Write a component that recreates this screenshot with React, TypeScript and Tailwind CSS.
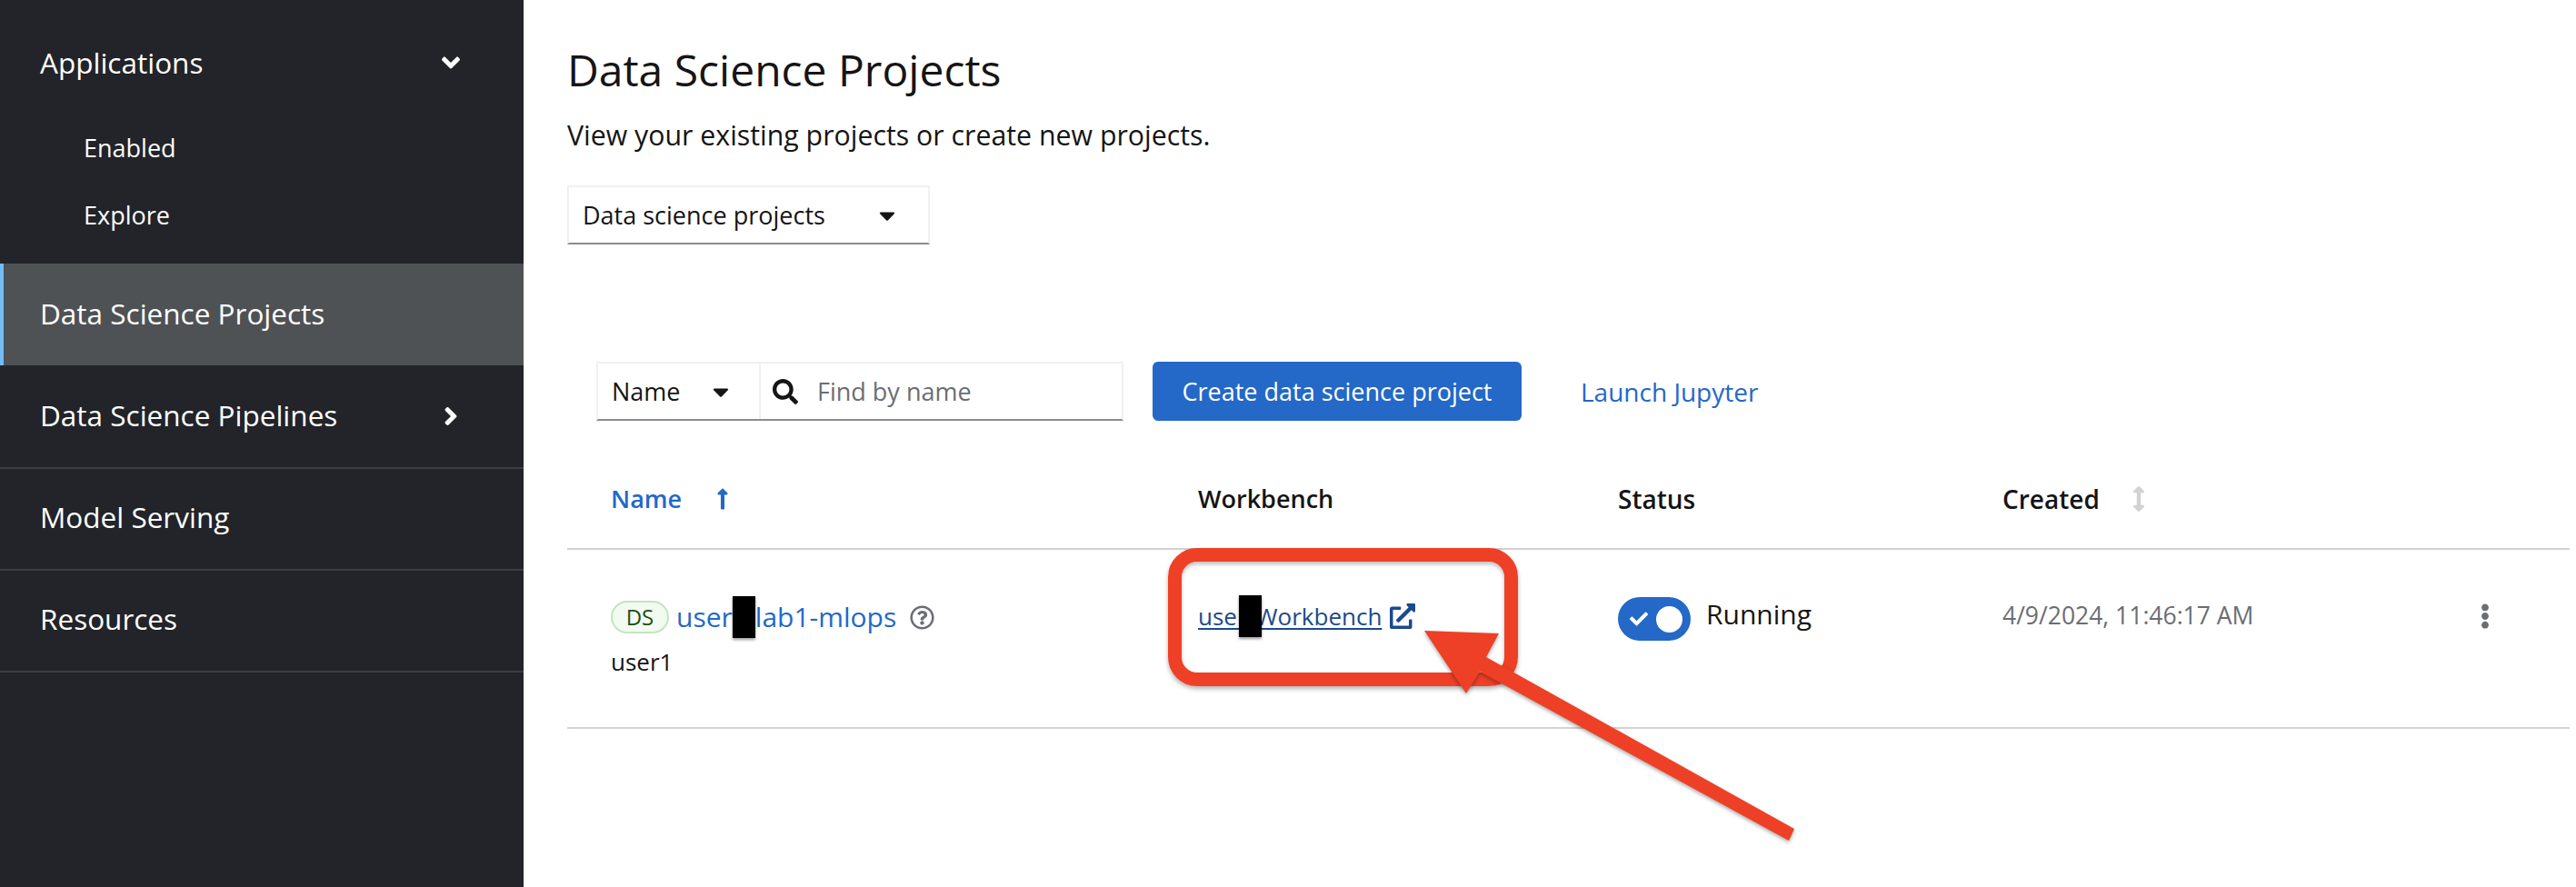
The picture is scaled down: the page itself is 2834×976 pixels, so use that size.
import React from "react";
import {
  FaAngleDown,
  FaAngleRight,
  FaArrowsAltV,
  FaCaretDown,
  FaCheck,
  FaEllipsisV,
  FaExternalLinkAlt,
  FaLongArrowAltUp,
  FaRegQuestionCircle,
  FaSearch,
} from "react-icons/fa";

function NavItem({ label, active, icon, border }: { label: string; active?: boolean; icon?: React.ReactNode; border?: boolean }) {
  return (
    <div
      className={
        active
          ? "h-[112px] flex items-center justify-between pl-[40px] pr-[69px] bg-[#4f5255] border-l-4 border-[#73bcf7]"
          : border
            ? "h-[114px] flex items-center justify-between pl-[44px] pr-[69px] border-b-2 border-[#3c3f42]"
            : "h-[112px] flex items-center justify-between pl-[44px] pr-[69px]"
      }
    >
      <span className="pb-[2px]">{label}</span>
      {icon}
    </div>
  );
}

function Sidebar() {
  return (
    <aside className="w-[576px] shrink-0 bg-[#222429] text-white text-[31.5px]">
      <div className="h-[290px] pt-[13px]">
        <div className="h-[112px] flex items-center justify-between pl-[44px] pr-[67px]">
          <span>Applications</span>
          <FaAngleDown className="w-[26px] h-[32px]" />
        </div>
        <div className="pl-[92px] text-[27px] flex flex-col gap-[34px] mt-[18px]">
          <div className="h-[40px] leading-[40px]">Enabled</div>
          <div className="h-[40px] leading-[40px]">Explore</div>
        </div>
      </div>
      <NavItem label="Data Science Projects" active />
      <NavItem label="Data Science Pipelines" border icon={<FaAngleRight className="w-[22px] h-[32px]" />} />
      <div className="h-[112px] pb-[4px] flex items-center pl-[44px] border-b-2 border-[#3c3f42]">Model Serving</div>
      <div className="h-[112px] pb-[4px] flex items-center pl-[44px] border-b-2 border-[#3c3f42]">Resources</div>
    </aside>
  );
}

// black bar painted over part of a name in the screenshot
function Redaction({ className }: { className?: string }) {
  return <span className={"relative inline-block align-middle -my-[8px] -translate-y-[3px] h-[46px] w-[25px] bg-black shadow-[0_2px_3px_rgba(0,0,0,0.4)] " + (className ?? "")} />;
}

function Annotation() {
  return (
    <>
      <div className="absolute left-[1285px] top-[603px] w-[385px] h-[152px] rounded-[32px] border-[15px] border-[#ee4026] shadow-[0_3px_5px_rgba(0,0,0,0.3),inset_0_3px_4px_rgba(0,0,0,0.25)]" />
      <svg className="absolute left-0 top-0 drop-shadow-[0_2px_2px_rgba(0,0,0,0.35)]" width="2834" height="976" viewBox="0 0 2834 976">
        <polygon
          fill="#ee4026"
          points="1567,694 1649,697 1635,723 1974,912 1968,925 1628,739 1613,763"
        />
      </svg>
    </>
  );
}

function Toolbar() {
  return (
    <div className="mt-[129px] ml-[32px] flex items-center h-[65px]">
      <div className="w-[580px] h-[65px] flex border-2 border-[#f0f0f0] border-b-[#8a8d90]">
        <div className="w-[179px] flex items-center justify-between pl-[15px] pr-[32px] border-r-2 border-[#f0f0f0] text-[27px] text-[#151515]">
          <span className="pt-[2px]">Name</span>
          <FaCaretDown className="w-[20px] h-[28px]" />
        </div>
        <div className="flex-1 flex items-center pl-[13px] gap-[21px] text-[27px] text-[#6a6e73]">
          <FaSearch className="w-[28px] h-[28px] text-[#151515]" />
          <span className="pt-[2px]">Find by name</span>
        </div>
      </div>
      <button className="ml-[32px] w-[406px] h-[65px] pt-[2px] rounded-[6px] bg-[#2468c8] text-white text-[27px]">Create data science project</button>
      <a className="ml-[65px] text-[28px] text-[#2468c8]">Launch Jupyter</a>
    </div>
  );
}

function ProjectTable() {
  return (
    <div className="mr-[7px]">
      <div className="h-[110px] mt-[32px] grid grid-cols-[694px_462px_423px_1fr] items-center border-b-2 border-[#d2d2d2] text-[28px] font-semibold text-[#151515]">
        <div className="pl-[48px] flex items-center text-[#2468c8] text-[27px] gap-[38px]">
          <span>Name</span>
          <FaLongArrowAltUp className="w-[14px] h-[26px]" />
        </div>
        <div className="text-[27px]">Workbench</div>
        <div>Status</div>
        <div className="flex items-center gap-[36px]">
          <span>Created</span>
          <FaArrowsAltV className="w-[14px] h-[28px] text-[#d2d2d2]" />
        </div>
      </div>
      <div className="h-[197px] pt-[52px] grid grid-cols-[694px_462px_423px_1fr] items-start border-b-2 border-[#d2d2d2]">
        <div className="pl-[48px]">
          <div className="flex items-center h-[48px] -mt-[2px]">
            <span className="w-[64px] h-[36px] rounded-full bg-[#f3faf2] border-2 border-[#c4e5bf] text-[#1e4f18] text-[24px] flex items-center justify-center">DS</span>
            <span className="ml-[8px] text-[30px] leading-[46px] text-[#2468c8] whitespace-nowrap">
              user
              <Redaction />
              lab1-mlops
            </span>
            <FaRegQuestionCircle className="ml-[15px] w-[27px] h-[27px] text-[#6a6e73]" />
          </div>
          <div className="mt-[7px] text-[26px] leading-[36px] text-[#151515]">user1</div>
        </div>
        <div className="flex items-center h-[48px] -mt-[3px]">
          <a className="text-[26px] leading-[46px] text-[#1b4a8c] whitespace-nowrap">
            <span className="underline underline-offset-[3px]">user</span>
            <Redaction className="-ml-[9px] -mr-[6px] z-10" />
            <span className="underline underline-offset-[3px]">Workbench</span>
          </a>
          <FaExternalLinkAlt className="ml-[9px] w-[28px] h-[28px] text-[#1b4a8c]" />
        </div>
        <div className="flex items-center h-[48px]">
          <div className="w-[80px] h-[48px] rounded-full bg-[#2468c8] flex items-center justify-between pl-[13px] pr-[9px]">
            <FaCheck className="w-[20px] h-[20px] text-white" />
            <span className="w-[29px] h-[29px] rounded-full bg-white" />
          </div>
          <span className="ml-[17px] mb-[12px] text-[30px] text-[#151515]">Running</span>
        </div>
        <div className="flex items-center justify-between h-[48px] -mt-[3px] pr-[81px]">
          <span className="text-[26.5px] text-[#6a6e73]">4/9/2024, 11:46:17 AM</span>
          <FaEllipsisV className="w-[24px] h-[28px] text-[#6a6e73]" />
        </div>
      </div>
    </div>
  );
}

export default function App() {
  return (
    <div className="relative w-[2834px] h-[976px] flex overflow-hidden bg-white font-['Open_Sans',sans-serif]">
      <Sidebar />
      <main className="flex-1 pl-[48px]">
        <h1 className="mt-[49px] text-[48px] leading-[56px] font-medium text-[#151515]">Data Science Projects</h1>
        <p className="mt-[24px] text-[30.3px] leading-[40px] text-[#151515]">View your existing projects or create new projects.</p>
        <div className="mt-[35px] w-[399px] h-[65px] flex items-center justify-between pl-[15px] pr-[35px] border-2 border-[#f0f0f0] border-b-[#8a8d90] text-[27px] text-[#151515]">
          <span className="pt-[1px]">Data science projects</span>
          <FaCaretDown className="w-[20px] h-[28px]" />
        </div>
        <Toolbar />
        <ProjectTable />
      </main>
      <Annotation />
    </div>
  );
}
